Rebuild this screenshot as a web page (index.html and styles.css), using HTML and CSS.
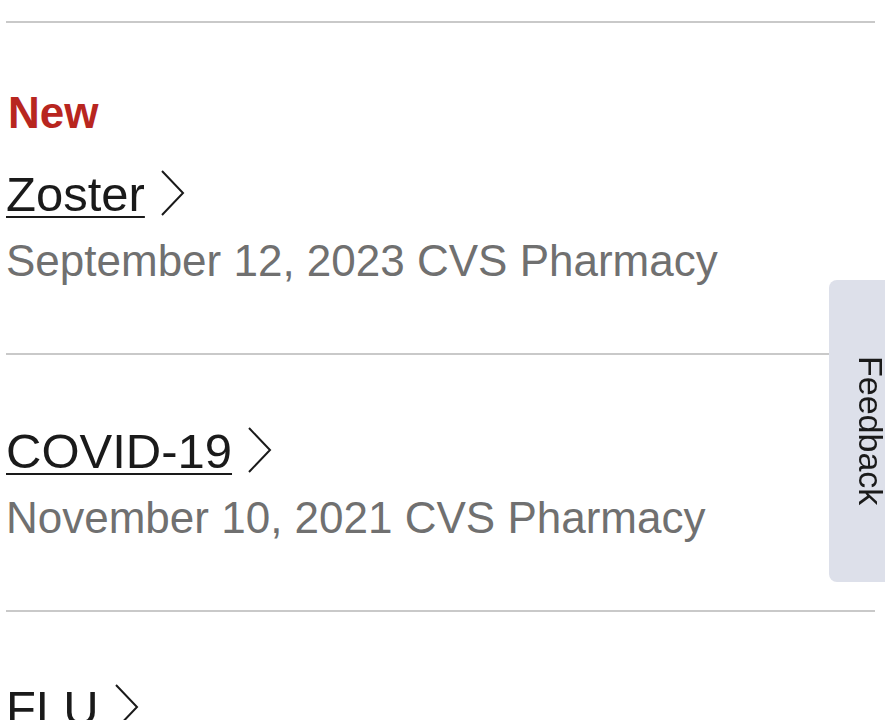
FILE: index.html
```html
<!DOCTYPE html>
<html lang="en">
<head>
    <meta charset="UTF-8">
    <meta name="viewport" content="width=device-width, initial-scale=1.0">
    <title>Vaccination history</title>
    <link rel="stylesheet" href="styles.css">
</head>
<body>
    <ul class="record-list">
        <li class="record">
            <div class="badge">New</div>
            <a href="#" class="record-title"><span class="name">Zoster</span><svg class="chevron" viewBox="0 0 26 48" width="26" height="48"><polyline points="2,2 23,24 2,46"/></svg></a>
            <div class="record-meta"><span>September 12, 2023</span> <span>CVS Pharmacy</span></div>
        </li>
        <li class="record">
            <a href="#" class="record-title"><span class="name">COVID-19</span><svg class="chevron" viewBox="0 0 26 48" width="26" height="48"><polyline points="2,2 23,24 2,46"/></svg></a>
            <div class="record-meta"><span>November 10, 2021</span> <span>CVS Pharmacy</span></div>
        </li>
        <li class="record">
            <a href="#" class="record-title"><span class="name plain">FLU</span><svg class="chevron" viewBox="0 0 26 48" width="26" height="48"><polyline points="2,2 23,24 2,46"/></svg></a>
        </li>
    </ul>

    <button class="feedback-tab" type="button"><span>Feedback</span></button>
</body>
</html>
```

FILE: styles.css
```css
body {
    font-family: "Liberation Sans", Arial, sans-serif;
    margin: 0;
    padding: 0 10px 0 6px;
    background: #fff;
    color: #1a1a1a;
    overflow: hidden;
}

.record-list {
    list-style: none;
    margin: 0;
    padding: 21px 0 0;
}

.record {
    border-top: 2px solid #c9c9c9;
    padding: 68px 0 66px;
}

.badge {
    color: #b8261f;
    font-size: 44px;
    font-weight: bold;
    line-height: 44px;
    margin-bottom: 31px;
    padding-left: 2px;
}

.record-title {
    display: block;
    color: #1a1a1a;
    font-size: 49px;
    line-height: 56px;
    text-decoration: none;
}

.record-title .name {
    text-decoration: underline;
    text-decoration-thickness: 2px;
    text-underline-offset: 5px;
}

.record-title .name.plain {
    text-decoration: none;
}

.chevron {
    display: inline-block;
    vertical-align: -6px;
    margin-left: 15px;
    fill: none;
    stroke: #1a1a1a;
    stroke-width: 2;
}

.record-meta {
    color: #707070;
    font-size: 44px;
    line-height: 52px;
    margin-top: 13px;
}

.feedback-tab {
    position: fixed;
    top: 280px;
    right: 0;
    width: 56px;
    height: 302px;
    padding: 0 0 0 28px;
    border: none;
    border-radius: 8px 0 0 8px;
    background: #dde0ea;
    display: flex;
    align-items: center;
    justify-content: center;
    font-family: "Liberation Sans", Arial, sans-serif;
    font-size: 34px;
    color: #1a1a1a;
}

.feedback-tab span {
    writing-mode: vertical-rl;
    line-height: 34px;
}
```
